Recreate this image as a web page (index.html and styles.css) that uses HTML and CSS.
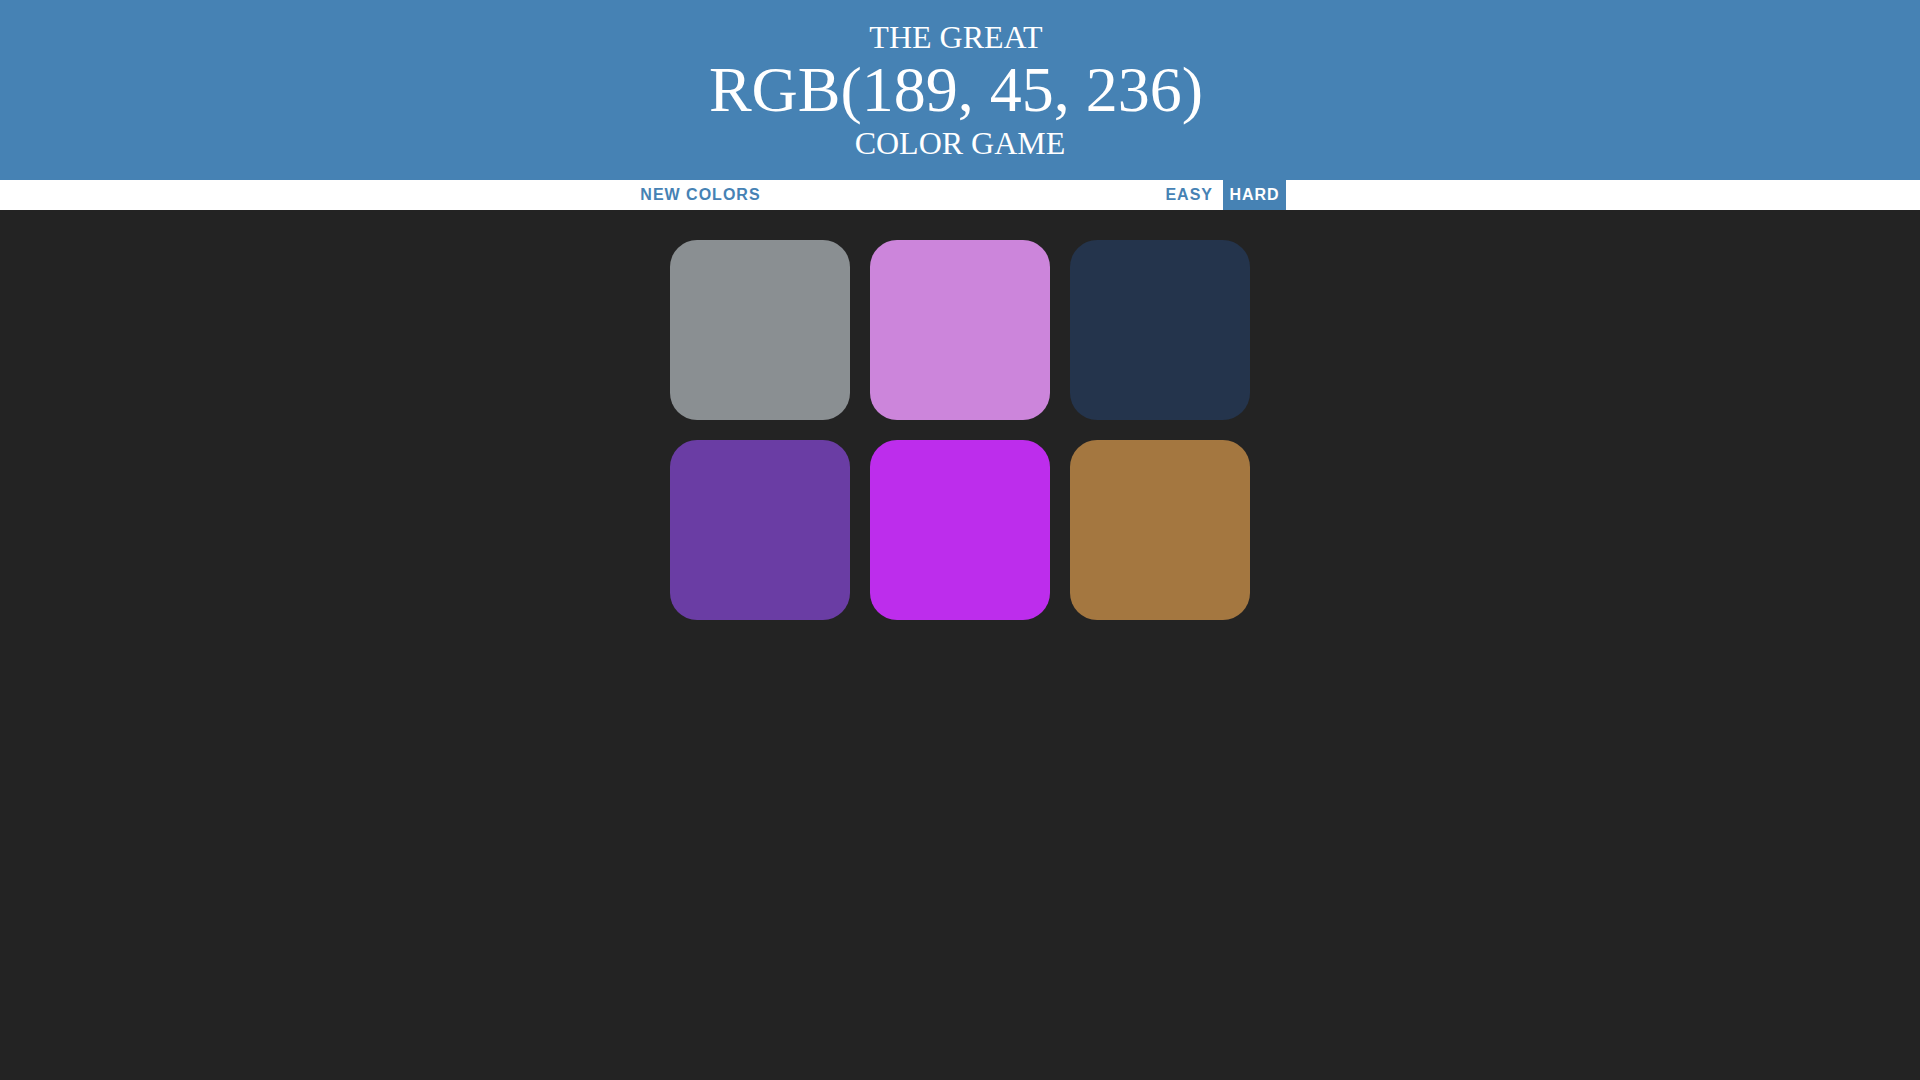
FILE: index.html
```html
<!DOCTYPE html>
<html>
<head>
<meta charset="utf-8">
<title>Color Game</title>
<link rel="stylesheet" href="styles.css">
</head>
<body>
<h1 class="title">The Great&nbsp;<br><span class="color-display">RGB(189, 45, 236)</span>&nbsp;<br>Color Game</h1>
<div class="stripe">
  <button class="btn">New Colors</button>
  <span class="message"></span>
  <button class="btn">Easy</button>
  <button class="btn selected">Hard</button>
</div>
<div class="container">
  <div class="square" style="background: rgb(138, 143, 146);"></div>
  <div class="square" style="background: rgb(204, 133, 219);"></div>
  <div class="square" style="background: rgb(36, 52, 76);"></div>
  <div class="square" style="background: rgb(106, 61, 164);"></div>
  <div class="square" style="background: rgb(189, 45, 236);"></div>
  <div class="square" style="background: rgb(164, 119, 64);"></div>
</div>
</body>
</html>
```
FILE: styles.css
```css
body {
  margin: 0;
  background: #232323;
  font-family: "Liberation Serif", "Times New Roman", serif;
}
.title {
  margin: 0;
  padding: 20px 0 19px;
  background: steelblue;
  color: #fff;
  text-align: center;
  font-size: 32px;
  font-weight: normal;
  line-height: 1.1;
  text-transform: uppercase;
}
.color-display {
  font-size: 200%;
}
.stripe {
  height: 30px;
  background: #fff;
  display: flex;
  justify-content: center;
  align-items: stretch;
  gap: 4.45px;
}
.btn {
  border: none;
  background: none;
  margin: 0;
  padding: 0 6px;
  height: 100%;
  font-family: "Liberation Sans", Arial, sans-serif;
  font-size: 16px;
  font-weight: 700;
  letter-spacing: 1px;
  text-transform: uppercase;
  color: steelblue;
  outline: none;
}
.btn.selected {
  background: steelblue;
  color: #fff;
}
.message {
  width: 20%;
}
.container {
  width: 600px;
  margin: 20px auto;
  padding: 10px 0;
  box-sizing: border-box;
  display: grid;
  grid-template-columns: repeat(3, 180px);
  gap: 20px;
  justify-content: center;
}
.square {
  width: 180px;
  height: 180px;
  border-radius: 15%;
}
```
